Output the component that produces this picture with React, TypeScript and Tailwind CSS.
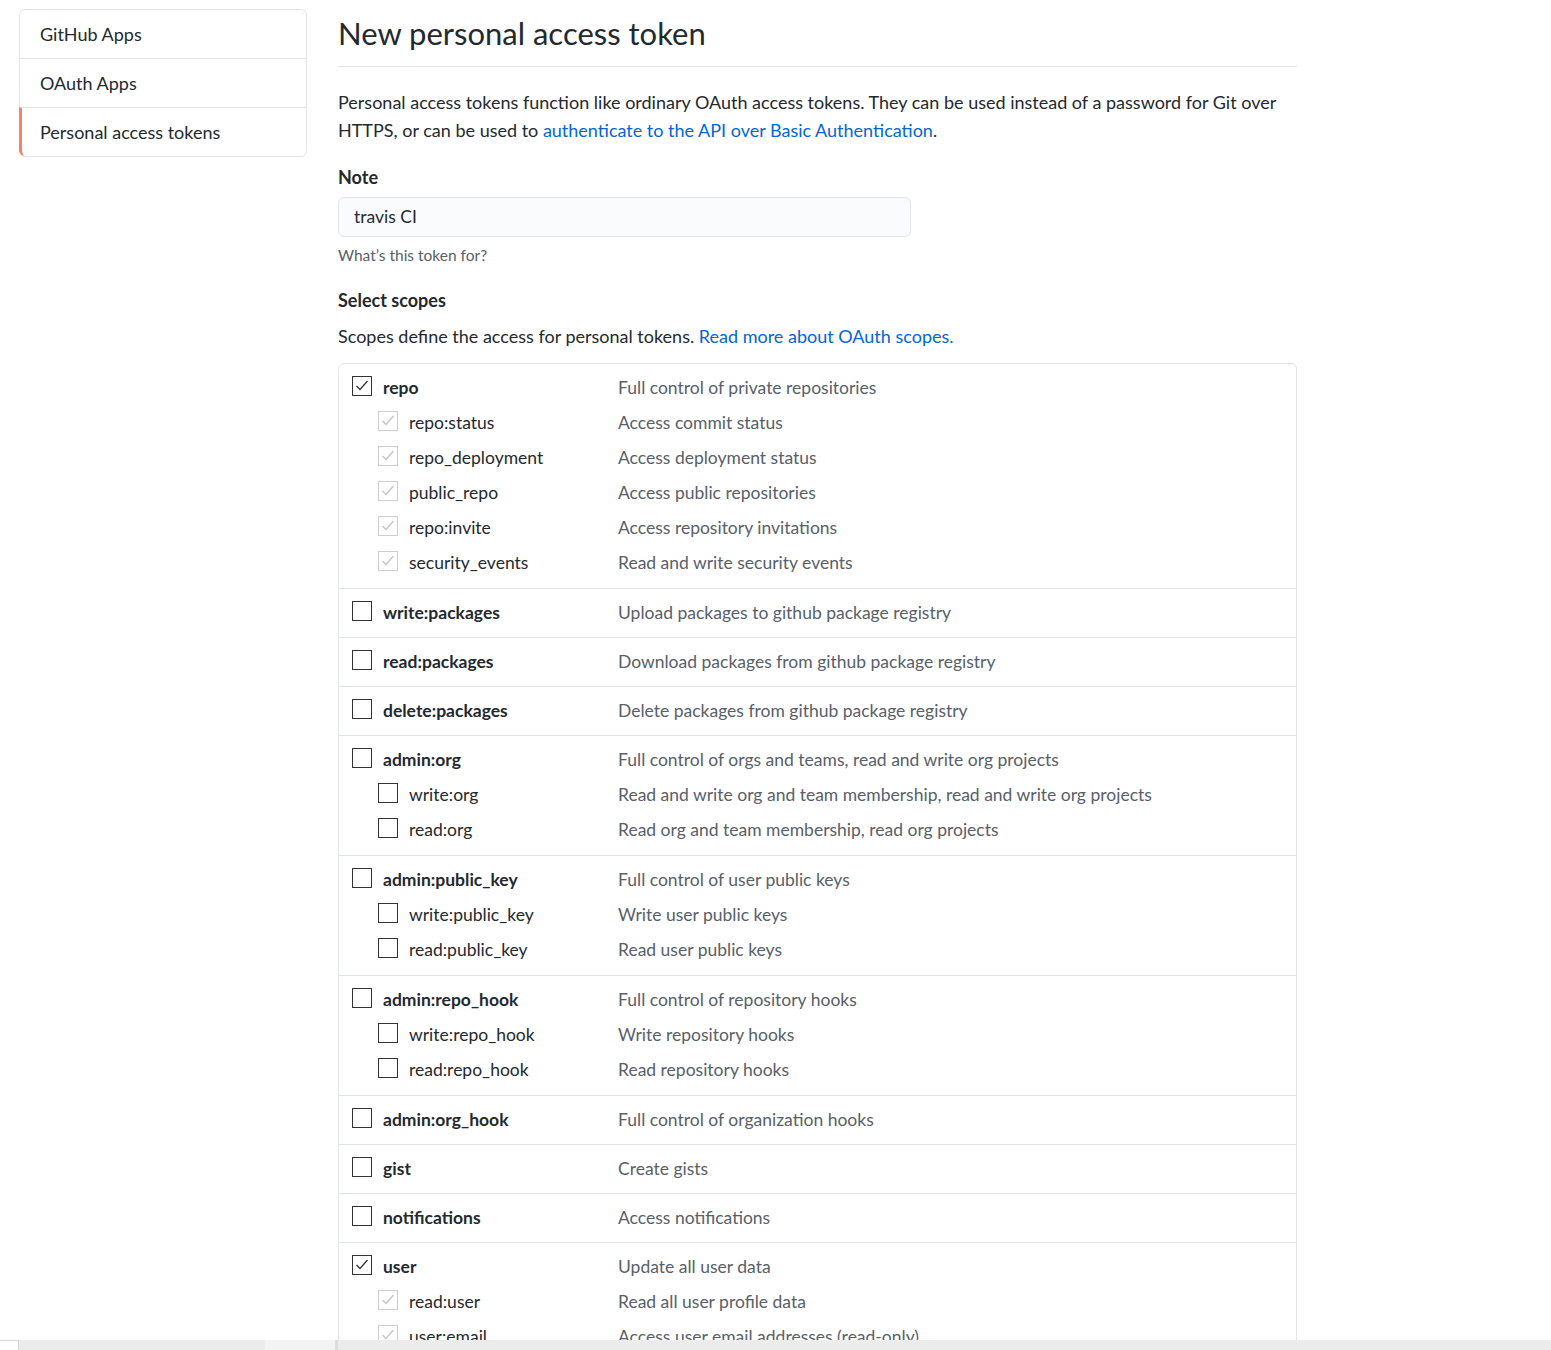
import React from "react";

type Scope = {
  name: string;
  desc: string;
  state: "checked" | "unchecked" | "implied";
  subs?: { name: string; desc: string; state: "checked" | "unchecked" | "implied" }[];
};

const scopes: Scope[] = [
  {
    name: "repo",
    desc: "Full control of private repositories",
    state: "checked",
    subs: [
      { name: "repo:status", desc: "Access commit status", state: "implied" },
      { name: "repo_deployment", desc: "Access deployment status", state: "implied" },
      { name: "public_repo", desc: "Access public repositories", state: "implied" },
      { name: "repo:invite", desc: "Access repository invitations", state: "implied" },
      { name: "security_events", desc: "Read and write security events", state: "implied" },
    ],
  },
  { name: "write:packages", desc: "Upload packages to github package registry", state: "unchecked" },
  { name: "read:packages", desc: "Download packages from github package registry", state: "unchecked" },
  { name: "delete:packages", desc: "Delete packages from github package registry", state: "unchecked" },
  {
    name: "admin:org",
    desc: "Full control of orgs and teams, read and write org projects",
    state: "unchecked",
    subs: [
      { name: "write:org", desc: "Read and write org and team membership, read and write org projects", state: "unchecked" },
      { name: "read:org", desc: "Read org and team membership, read org projects", state: "unchecked" },
    ],
  },
  {
    name: "admin:public_key",
    desc: "Full control of user public keys",
    state: "unchecked",
    subs: [
      { name: "write:public_key", desc: "Write user public keys", state: "unchecked" },
      { name: "read:public_key", desc: "Read user public keys", state: "unchecked" },
    ],
  },
  {
    name: "admin:repo_hook",
    desc: "Full control of repository hooks",
    state: "unchecked",
    subs: [
      { name: "write:repo_hook", desc: "Write repository hooks", state: "unchecked" },
      { name: "read:repo_hook", desc: "Read repository hooks", state: "unchecked" },
    ],
  },
  { name: "admin:org_hook", desc: "Full control of organization hooks", state: "unchecked" },
  { name: "gist", desc: "Create gists", state: "unchecked" },
  { name: "notifications", desc: "Access notifications", state: "unchecked" },
  {
    name: "user",
    desc: "Update all user data",
    state: "checked",
    subs: [
      { name: "read:user", desc: "Read all user profile data", state: "implied" },
      { name: "user:email", desc: "Access user email addresses (read-only)", state: "implied" },
      { name: "user:follow", desc: "Follow and unfollow users", state: "implied" },
    ],
  },
  { name: "delete_repo", desc: "Delete repositories", state: "unchecked" },
];

const Checkbox = ({ state }: { state: Scope["state"] }) => {
  const border = state === "implied" ? "#cdcdcd" : "#333333";
  return (
    <svg width="20" height="20" viewBox="0 0 20 20" className="relative top-[-3px] shrink-0">
      <rect x="0.5" y="0.5" width="19" height="19" fill="white" stroke={border} />
      {state !== "unchecked" && (
        <polyline
          points="4.5,10 8,13.5 15.5,5"
          fill="none"
          stroke={state === "implied" ? "#c4c4c4" : "#333333"}
          strokeWidth="1.3"
        />
      )}
    </svg>
  );
};

const ScopeLine = ({
  name,
  desc,
  state,
  sub,
}: {
  name: string;
  desc: string;
  state: Scope["state"];
  sub?: boolean;
}) => (
  <div className="flex h-[35px] items-center">
    <div className={`flex w-[266px] shrink-0 items-center gap-[11px] ${sub ? "pl-[26px]" : ""}`}>
      <Checkbox state={state} />
      <span className={`${sub ? "" : "font-bold"} text-[#24292e]`}>{name}</span>
    </div>
    <span className="text-[#586069]">{desc}</span>
  </div>
);

export default function App() {
  const menu = ["GitHub Apps", "OAuth Apps", "Personal access tokens"];

  return (
    <div
      className="h-screen overflow-hidden bg-white text-[18px] text-[#24292e]"
      style={{ fontFamily: 'Lato, "Noto Sans", sans-serif' }}
    >
      <div className="flex gap-[31px] pl-[19px] pt-[9px]">
        {/* Sidebar */}
        <nav className="w-[288px] shrink-0 self-start rounded-md border border-[#e1e4e8]">
          {menu.map((item, i) => (
            <div
              key={item}
              className={`flex items-center ${i > 0 ? "h-[49px] border-t border-[#e1e4e8]" : "h-[48px]"} ${
                i === 2 ? "-ml-px rounded-bl-md border-l-[3px] border-l-[#f9826c] pl-[18px]" : "pl-[20px]"
              }`}
            >
              {item}
            </div>
          ))}
        </nav>

        {/* Main */}
        <main className="w-[959px] shrink-0 pt-[4px]">
          <div className="border-b border-[#e1e4e8] pb-[13px]">
            <h1 className="text-[31px] leading-[40px] font-normal">New personal access token</h1>
          </div>

          <p className="mt-[21px] leading-[28px]">
            Personal access tokens function like ordinary OAuth access tokens. They can be used instead of a
            password for Git over HTTPS, or can be used to{" "}
            <a className="text-[#0366d6]">authenticate to the API over Basic Authentication</a>.
          </p>

          <div className="mt-[20px]">
            <div className="font-bold leading-[26px]">Note</div>
            <div className="mt-[7px] flex h-[40px] w-[573px] items-center rounded-md border border-[#e1e4e8] bg-[#fafbfc] px-[15px] text-[17.5px]">
              travis CI
            </div>
            <div className="mt-[8px] text-[15.5px] leading-[20px] text-[#586069]">What’s this token for?</div>
          </div>

          <div className="mt-[22px] font-bold leading-[26px]">Select scopes</div>
          <p className="mt-[9px] leading-[28px]">
            Scopes define the access for personal tokens.{" "}
            <a className="text-[#0366d6]">Read more about OAuth scopes.</a>
          </p>

          <div className="mt-[13px] rounded-md border border-[#e1e4e8] text-[17.5px]">
            {scopes.map((s, i) => (
              <div
                key={s.name}
                className={`pl-[13px] ${s.subs ? "py-[7px]" : "pt-[7px] pb-[6px]"} ${
                  i > 0 ? "border-t border-[#e1e4e8]" : ""
                }`}
              >
                <ScopeLine name={s.name} desc={s.desc} state={s.state} />
                {s.subs?.map((sub) => (
                  <ScopeLine key={sub.name} name={sub.name} desc={sub.desc} state={sub.state} sub />
                ))}
              </div>
            ))}
          </div>
        </main>
      </div>

      {/* horizontal scrollbar strip */}
      <div className="fixed bottom-0 left-0 flex h-[10px] w-full bg-[#ececec]">
        <div className="h-full w-[19px] border-t border-r border-[#d6d6d6] bg-white" />
        <div className="ml-[246px] h-full w-[70px] bg-[#f3f3f3]" />
        <div className="h-full w-[3px] bg-[#dcdcdc]" />
      </div>
    </div>
  );
}
